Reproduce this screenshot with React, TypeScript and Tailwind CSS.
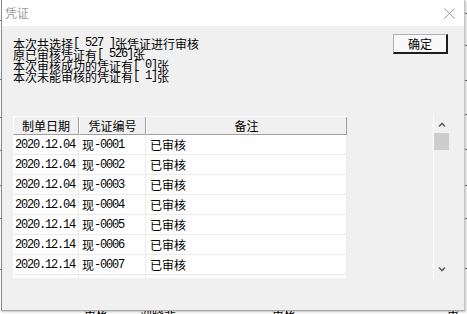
const rows = [
  { date: "2020.12.04", no: "0001" },
  { date: "2020.12.04", no: "0002" },
  { date: "2020.12.04", no: "0003" },
  { date: "2020.12.04", no: "0004" },
  { date: "2020.12.14", no: "0005" },
  { date: "2020.12.14", no: "0006" },
  { date: "2020.12.14", no: "0007" },
];

const leftTicks = [20, 79, 117, 150, 185, 218, 269];
const rightTicks = [13, 45, 80, 114, 149, 185, 218, 268];

function Mono({ children }: { children: React.ReactNode }) {
  return <span className="font-['Liberation_Mono',monospace] tracking-[-1.2px] whitespace-pre">{children}</span>;
}

function Line({ children }: { children: React.ReactNode }) {
  return <div className="flex items-center h-[11px] whitespace-pre">{children}</div>;
}

export default function App() {
  return (
    <div className="relative w-[467px] h-[314px] overflow-hidden bg-white font-['Noto_Sans_CJK_SC','Noto_Sans',sans-serif]">
      {/* spreadsheet behind the dialog */}
      {leftTicks.map((y) => (
        <div key={"l" + y} className="absolute left-0 w-[2px] h-px bg-[#6a6a6a]" style={{ top: y }} />
      ))}
      {rightTicks.map((y) => (
        <div key={"r" + y} className="absolute right-0 w-[3px] h-px bg-[#6a6a6a]" style={{ top: y }} />
      ))}
      <div className="absolute left-[84px] top-[308px] text-[12px] leading-none text-black">审核</div>
      <div className="absolute left-[140px] top-[308px] text-[12px] leading-none text-black">刘晓菲</div>
      <div className="absolute left-[272px] top-[308px] text-[12px] leading-none text-black">审核</div>
      <div className="absolute left-[447px] top-[308px] text-[12px] leading-none text-black">审核</div>

      {/* dialog */}
      <div className="absolute left-[1px] top-0 w-[464px] h-[311px] flex flex-col border-l border-[#8a8a8a] border-r border-r-[#c4c4c4] border-b border-b-[#a8a8a8] shadow-[1px_1px_2px_rgba(0,0,0,0.25)]">
        <div className="h-[26px] bg-white flex items-center justify-between pl-[3px] pr-[9px]">
          <span className="text-[12px] text-[#9c9c9c] leading-none">凭证</span>
          <svg width="11" height="11" viewBox="0 0 11 11">
            <path d="M0.5 0.5 L10.5 10.5 M10.5 0.5 L0.5 10.5" stroke="#9a9a9a" strokeWidth="1" fill="none" />
          </svg>
        </div>

        <div className="flex-1 bg-[#f0f0f0] pt-[8px] pl-[11px] pr-[16px]">
          <div className="flex items-start justify-between h-[47px]">
            <div className="mt-[4px] text-[12px] leading-[11px] text-black">
              <Line>本次共选择<Mono>[ 527 ]</Mono>张凭证进行审核</Line>
              <Line>原已审核凭证有<Mono>[ 526]</Mono>张</Line>
              <Line>本次审核成功的凭证有<Mono>[ 0]</Mono>张</Line>
              <Line>本次未能审核的凭证有<Mono>[ 1]</Mono>张</Line>
            </div>
            <button className="w-[55px] h-[20px] bg-[#f9f9f9] border-t border-l border-[#b0b0b0] border-r-2 border-b-2 border-r-[#1e1e1e] border-b-[#1e1e1e] text-[12px] leading-none text-black flex items-center justify-center">
              确定
            </button>
          </div>

          <div className="mt-[35px] flex h-[162px] w-[437px]">
            <div className="w-[420px] h-full overflow-hidden bg-[#f0f0f0]">
              <div className="w-[334px]">
                <div className="flex h-[19px] text-[12px] leading-none text-black border-t border-white">
                  <div className="w-[66px] flex items-center justify-center border-l border-white border-r border-r-[#a0a0a0] border-b border-b-[#a0a0a0]">制单日期</div>
                  <div className="w-[67px] flex items-center justify-center border-l border-white border-r border-r-[#a0a0a0] border-b border-b-[#a0a0a0]">凭证编号</div>
                  <div className="w-[201px] flex items-center justify-center border-l border-white border-r border-r-[#a0a0a0] border-b border-b-[#a0a0a0]">备注</div>
                </div>
                {[...rows, { date: "", no: "" }].map((r, i) => (
                  <div key={i} className="flex h-[20px] bg-white text-[12px] leading-none text-black">
                    <div className="w-[66px] flex items-center pl-[2px] border-r border-b border-[#ececec]">
                      <Mono>{r.date}</Mono>
                    </div>
                    <div className="w-[67px] flex items-center pl-[3px] border-r border-b border-[#ececec]">
                      {r.no && (
                        <>
                          现<Mono>-{r.no}</Mono>
                        </>
                      )}
                    </div>
                    <div className="w-[201px] flex items-center pl-[4px] border-r border-b border-[#ececec]">
                      {r.no && "已审核"}
                    </div>
                  </div>
                ))}
              </div>
            </div>
            <div className="w-[17px] h-full border-l border-white bg-[#f0f0f0] flex flex-col">
              <div className="h-[17px] flex items-center justify-center">
                <svg width="8" height="5" viewBox="0 0 8 5">
                  <path d="M1 4.5 L4 1.5 L7 4.5" stroke="#606060" strokeWidth="1.6" fill="none" />
                </svg>
              </div>
              <div className="h-[17px] w-[15px] bg-[#cdcdcd]" />
              <div className="flex-1" />
              <div className="h-[17px] flex items-center justify-center">
                <svg width="8" height="5" viewBox="0 0 8 5">
                  <path d="M1 0.5 L4 3.5 L7 0.5" stroke="#606060" strokeWidth="1.6" fill="none" />
                </svg>
              </div>
            </div>
          </div>
        </div>
      </div>
    </div>
  );
}
